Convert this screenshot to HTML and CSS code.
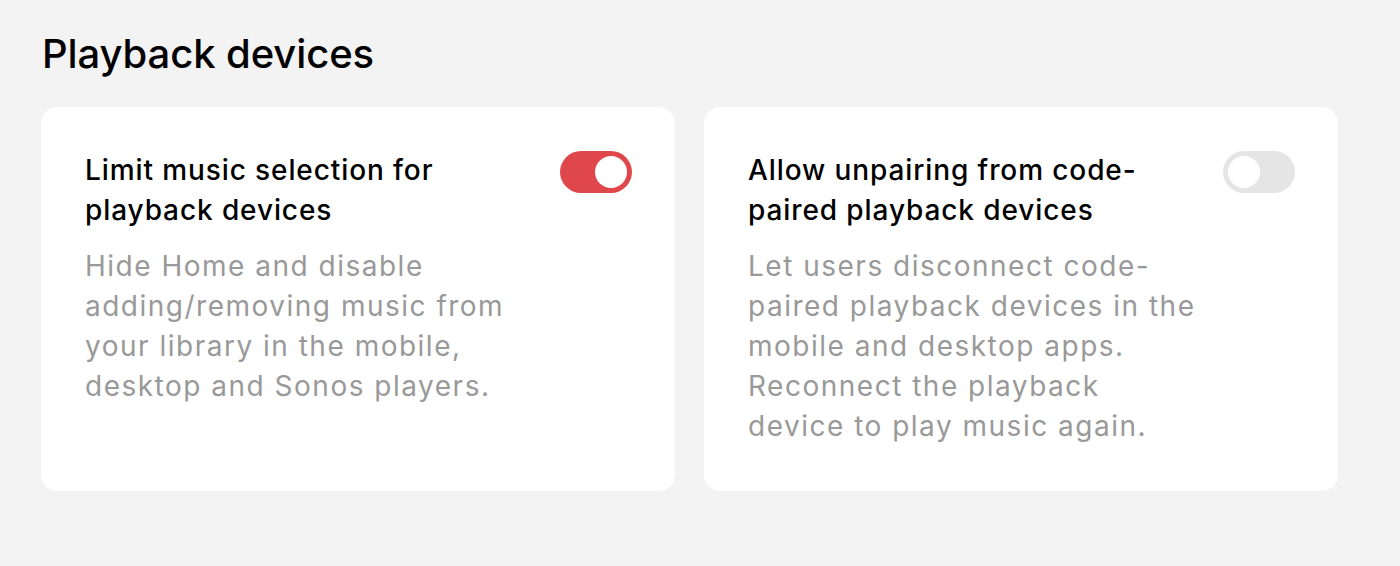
FILE: index.html
```html
<!DOCTYPE html>
<html lang="en">

<head>
    <meta charset="UTF-8">
    <meta name="viewport" content="width=device-width, initial-scale=1.0">
    <title>Playback devices</title>
    <link rel="stylesheet" href="styles.css">
</head>

<body>
    <div class="page">
        <h2 class="section-title">Playback devices</h2>
        <div class="cards">
            <div class="card">
                <div class="card-text">
                    <h3>Limit music selection for playback devices</h3>
                    <p>Hide Home and disable adding/removing music from your library in the mobile, desktop and Sonos players.</p>
                </div>
                <span class="toggle on"><span class="knob"></span></span>
            </div>
            <div class="card">
                <div class="card-text">
                    <h3>Allow unpairing from code-paired playback devices</h3>
                    <p>Let users disconnect code-paired playback devices in the mobile and desktop apps. Reconnect the playback device to play music again.</p>
                </div>
                <span class="toggle"><span class="knob"></span></span>
            </div>
        </div>
    </div>
</body>

</html>
```

FILE: styles.css
```css
* {
    padding: 0;
    margin: 0;
    box-sizing: border-box;
}

body {
    background-color: #f3f3f3;
    font-family: Inter, "Noto Sans", sans-serif;
    color: #000;
}

.page {
    width: 1297px;
    padding-top: 30px;
    margin-left: 41px;
}

.section-title {
    font-size: 40px;
    line-height: 48px;
    font-weight: 500;
    letter-spacing: -0.1px;
    padding-left: 1px;
    margin-bottom: 29px;
}

.cards {
    display: grid;
    grid-template-columns: 1fr 1fr;
    gap: 29px;
}

.card {
    background-color: #fff;
    border-radius: 16px;
    padding: 44px 43px 45px 44px;
    display: flex;
    align-items: flex-start;
}

.card-text {
    width: 450px;
}

.card h3 {
    font-size: 28px;
    line-height: 40px;
    font-weight: 500;
    letter-spacing: 0.9px;
    margin-top: -1px;
}

.card p {
    font-size: 28px;
    line-height: 40px;
    color: #999;
    letter-spacing: 1.5px;
    margin-top: 16px;
}

/* toggle */

.toggle {
    margin-left: auto;
    width: 72px;
    height: 42px;
    border-radius: 21px;
    background-color: #e5e5e5;
    display: flex;
    align-items: center;
    padding: 0 5px;
}

.toggle .knob {
    width: 32px;
    height: 32px;
    border-radius: 50%;
    background-color: #fff;
}

.toggle.on {
    background-color: #e0474c;
    justify-content: flex-end;
}
```
